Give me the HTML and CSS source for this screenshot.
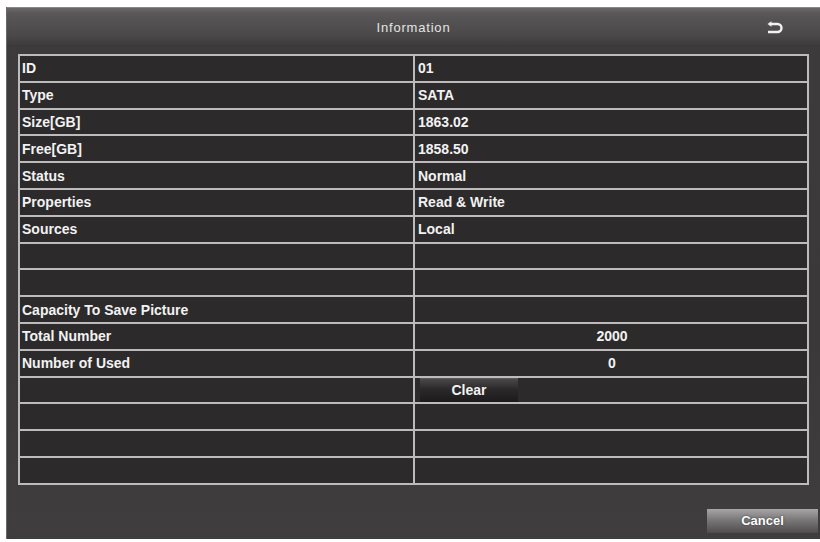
FILE: index.html
```html
<!DOCTYPE html>
<html lang="en">
<head>
    <meta charset="UTF-8">
    <meta name="viewport" content="width=device-width, initial-scale=1.0">
    <title>Information</title>
    <link rel="stylesheet" href="styles.css">
</head>
<body>
    <div class="panel">
        <div class="header">
            <span></span>
            <span class="title">Information</span>
            <!-- back arrow -->
            <svg class="back" width="18" height="14" viewBox="0 0 18 14">
                <path d="M3 3 H11.5 A4 4 0 0 1 11.5 11 H2" fill="none" stroke="#f2f2f2" stroke-width="2.4"/>
                <path d="M1.5 3 L5.5 0.3 L5.5 5.7 Z" fill="#f2f2f2"/>
            </svg>
        </div>

        <div class="content">
            <div class="infoGrid">
                <div class="cell">ID</div><div class="cell val">01</div>
                <div class="cell">Type</div><div class="cell val">SATA</div>
                <div class="cell">Size[GB]</div><div class="cell val">1863.02</div>
                <div class="cell">Free[GB]</div><div class="cell val">1858.50</div>
                <div class="cell">Status</div><div class="cell val">Normal</div>
                <div class="cell">Properties</div><div class="cell val">Read &amp; Write</div>
                <div class="cell">Sources</div><div class="cell val">Local</div>
                <div class="cell"></div><div class="cell val"></div>
                <div class="cell"></div><div class="cell val"></div>
                <div class="cell">Capacity To Save Picture</div><div class="cell val"></div>
                <div class="cell">Total Number</div><div class="cell mid">2000</div>
                <div class="cell">Number of Used</div><div class="cell mid">0</div>
                <div class="cell"></div><div class="cell btnCell"><button class="clear">Clear</button></div>
                <div class="cell"></div><div class="cell val"></div>
                <div class="cell"></div><div class="cell val"></div>
                <div class="cell"></div><div class="cell val"></div>
            </div>
        </div>

        <div class="footer">
            <button class="cancel">Cancel</button>
        </div>
    </div>
</body>
</html>
```

FILE: styles.css
```css
body {
    margin: 0;
    background-color: #ffffff;
    font-family: "Liberation Sans", Arial, sans-serif;
}

.panel {
    margin: 7px 0 0 6px;
    width: 814px;
    height: 532px;
    display: flex;
    flex-direction: column;
    background: linear-gradient(#3d3b3c, #3a3839 60%, #3f3d3e);
    border-left: 1px solid #6a6869;
    box-sizing: border-box;
}

.header {
    height: 40px;
    display: grid;
    grid-template-columns: 1fr auto 1fr;
    align-items: center;
    padding-right: 36px;
    background: linear-gradient(#6a6869, #585657 15%, #4a4849 70%, #3a3839);
    border-top: 1px solid #8a8889;
    box-sizing: border-box;
}

.title {
    color: #e4e4e4;
    font-size: 13px;
    letter-spacing: 0.8px;
    padding-left: 36px;
}

.back {
    justify-self: end;
}

.content {
    padding: 7px 11px 0 11px;
}

.infoGrid {
    display: grid;
    grid-template-columns: 393px 1fr;
    grid-auto-rows: 24.8px;
    gap: 2px;
    padding: 2px;
    background-color: #bdbbbc;
}

.cell {
    background-color: #2c2a2b;
    color: #f2f2f2;
    font-size: 14px;
    font-weight: bold;
    display: flex;
    align-items: center;
    padding-left: 2px;
}

.val {
    padding-left: 3px;
}

.mid {
    justify-content: center;
}

.btnCell {
    padding-left: 5px;
}

.clear {
    width: 98px;
    height: 100%;
    border: none;
    border-top: 1px solid #5c5a5b;
    background: linear-gradient(#4a4849, #2a2829 45%, #1c1a1b);
    color: #f2f2f2;
    font-family: "Liberation Sans", Arial, sans-serif;
    font-size: 14px;
    font-weight: bold;
    cursor: pointer;
}

.footer {
    display: flex;
    justify-content: flex-end;
    padding: 24px 2px 0 0;
}

.cancel {
    width: 111px;
    height: 24px;
    border: none;
    background: linear-gradient(#a8a6a7, #7e7c7d 40%, #4e4c4d);
    color: #ffffff;
    font-family: "Liberation Sans", Arial, sans-serif;
    font-size: 13px;
    font-weight: bold;
    text-shadow: 0 0 2px #333;
    cursor: pointer;
}
```
